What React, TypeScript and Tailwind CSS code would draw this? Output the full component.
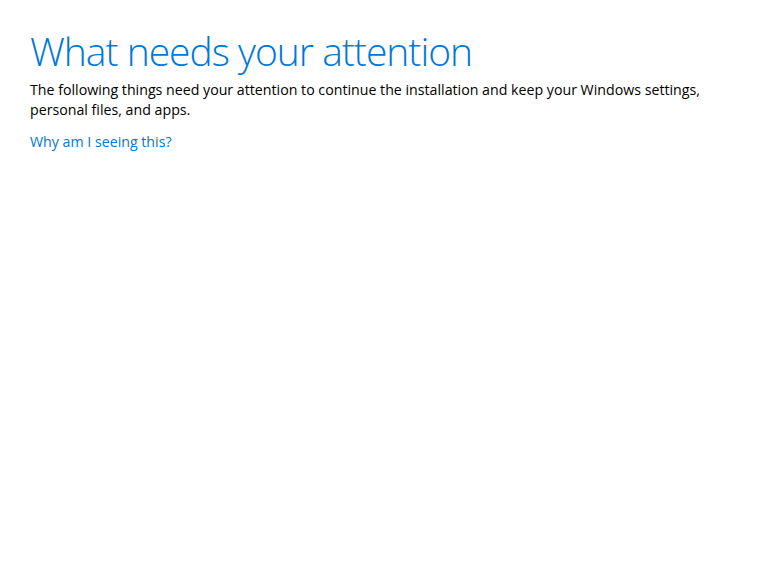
export default function App() {
  return (
    <div className="w-[774px] h-[579px] bg-white px-[30px] pt-[27px]" style={{ fontFamily: '"Open Sans", "Noto Sans", sans-serif' }}>
      <h1 className="text-[39px] leading-[48px] font-light text-[#0078d7] tracking-[-1px]">What needs your attention</h1>
      <p className="mt-[5px] text-[14.2px] leading-[20px] text-black w-[700px]">
        The following things need your attention to continue the installation and keep your Windows settings, personal files, and apps.
      </p>
      <div className="mt-[12px] text-[14.2px] leading-[20px] text-[#0078d7]">Why am I seeing this?</div>
    </div>
  );
}
